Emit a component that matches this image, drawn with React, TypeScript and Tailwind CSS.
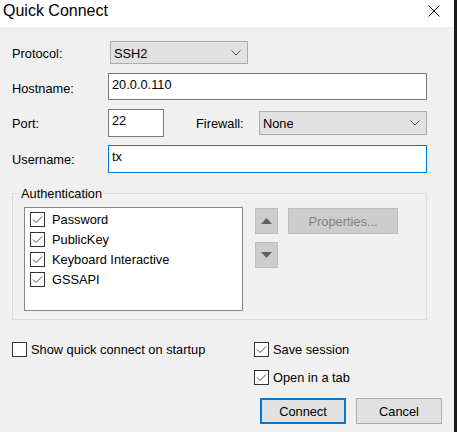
import React from "react";

function Check({ checked }: { checked: boolean }) {
  return (
    <span className="flex h-[15px] w-[15px] shrink-0 items-center justify-center border border-[#333333] bg-white">
      {checked ? (
        <svg width="13" height="13" viewBox="0 0 13 13">
          <polyline points="2,6.5 5,9.5 11,3.5" fill="none" stroke="#4a4a4a" strokeWidth="1" />
        </svg>
      ) : null}
    </span>
  );
}

function Chevron() {
  return (
    <svg width="10" height="6" viewBox="0 0 10 6">
      <polyline points="0.5,0.5 5,5 9.5,0.5" fill="none" stroke="#555555" strokeWidth="1" />
    </svg>
  );
}

const methods = ["Password", "PublicKey", "Keyboard Interactive", "GSSAPI"];

export default function App() {
  return (
    <div className="flex h-[432px] w-[457px] flex-col border-r-[3px] border-[#1b1b1b] font-['Liberation_Sans',Arial,sans-serif] text-[12.8px] leading-[15px] text-black">
      {/* title bar */}
      <div className="flex h-[27px] shrink-0 items-start bg-white">
        <span className="pl-[3px] pt-[2px] text-[16px] leading-[18px]">Quick Connect</span>
        <svg className="ml-auto mr-[14px] mt-[5px]" width="12" height="12" viewBox="0 0 12 12">
          <path d="M0.5 0.5 L11.5 11.5 M11.5 0.5 L0.5 11.5" stroke="#111111" strokeWidth="1" />
        </svg>
      </div>

      <div className="flex flex-1 flex-col bg-[#f0f0f0] pl-3 pt-[14px]">
        {/* protocol */}
        <div className="flex h-[23px] items-center">
          <span className="w-[98px] pt-px">Protocol:</span>
          <div className="flex h-[23px] w-[138px] items-center justify-between border border-[#adadad] bg-[#e1e1e1] pl-[3px] pr-[6px] pt-px">
            <span>SSH2</span>
            <Chevron />
          </div>
        </div>

        {/* hostname */}
        <div className="mt-[9px] flex h-[27px] items-center">
          <span className="w-[96px] pt-[3px]">Hostname:</span>
          <div className="h-[27px] w-[319px] border border-[#7a7a7a] bg-white pl-[3px] pt-[3px]">20.0.0.110</div>
        </div>

        {/* port / firewall */}
        <div className="mt-[9px] flex h-[28px] items-center">
          <span className="w-[96px]">Port:</span>
          <div className="h-[28px] w-[56px] border border-[#7a7a7a] bg-white pl-[3px] pt-[3px]">22</div>
          <span className="ml-[32px] w-[63px]">Firewall:</span>
          <div className="flex h-[24px] w-[168px] items-center justify-between border border-[#adadad] bg-[#e1e1e1] pl-[3px] pr-[6px]">
            <span>None</span>
            <Chevron />
          </div>
        </div>

        {/* username */}
        <div className="mt-[8px] flex h-[28px] items-center">
          <span className="w-[96px]">Username:</span>
          <div className="h-[28px] w-[319px] border border-[#0078d7] bg-white pl-[3px] pt-[3px]">tx</div>
        </div>

        {/* authentication group */}
        <div className="relative mt-[20px] flex h-[127px] w-[415px] items-start border border-[#dcdcdc] pl-[11px] pt-[13px]">
          <span className="absolute left-[6px] top-[-8px] bg-[#f0f0f0] px-[2px]">Authentication</span>
          <div className="flex h-[104px] w-[219px] flex-col border border-[#828790] bg-white pl-[5px] pt-px">
            {methods.map((m) => (
              <div key={m} className="flex h-[20px] items-center gap-[7px]">
                <Check checked />
                <span>{m}</span>
              </div>
            ))}
          </div>
          <div className="ml-[12px] mt-px flex flex-col gap-[8px]">
            <div className="flex h-[26px] w-[23px] items-center justify-center border border-[#bfbfbf] bg-[#cccccc]">
              <svg width="11" height="6" viewBox="0 0 11 6">
                <polygon points="5.5,0 11,6 0,6" fill="#606060" />
              </svg>
            </div>
            <div className="flex h-[26px] w-[23px] items-center justify-center border border-[#bfbfbf] bg-[#cccccc]">
              <svg width="11" height="6" viewBox="0 0 11 6">
                <polygon points="0,0 11,0 5.5,6" fill="#606060" />
              </svg>
            </div>
          </div>
          <div className="ml-[10px] mt-px flex h-[26px] w-[110px] items-center justify-center border border-[#bfbfbf] bg-[#cccccc] text-[#838383]">
            Properties...
          </div>
        </div>

        {/* bottom */}
        <div className="mt-[22px] flex">
          <div className="flex w-[242px] items-start">
            <div className="flex h-[15px] items-center gap-[4px]">
              <Check checked={false} />
              <span>Show quick connect on startup</span>
            </div>
          </div>
          <div className="flex flex-col">
            <div className="flex h-[15px] items-center gap-[4px]">
              <Check checked />
              <span>Save session</span>
            </div>
            <div className="mt-[13px] flex h-[15px] items-center gap-[4px]">
              <Check checked />
              <span>Open in a tab</span>
            </div>
            <div className="ml-[6px] mt-[13px] flex gap-[10px]">
              <div className="flex h-[26px] w-[86px] items-center justify-center border-2 border-[#0078d7] bg-[#e1e1e1]">Connect</div>
              <div className="flex h-[26px] w-[86px] items-center justify-center border border-[#adadad] bg-[#e1e1e1]">Cancel</div>
            </div>
          </div>
        </div>
      </div>
    </div>
  );
}
